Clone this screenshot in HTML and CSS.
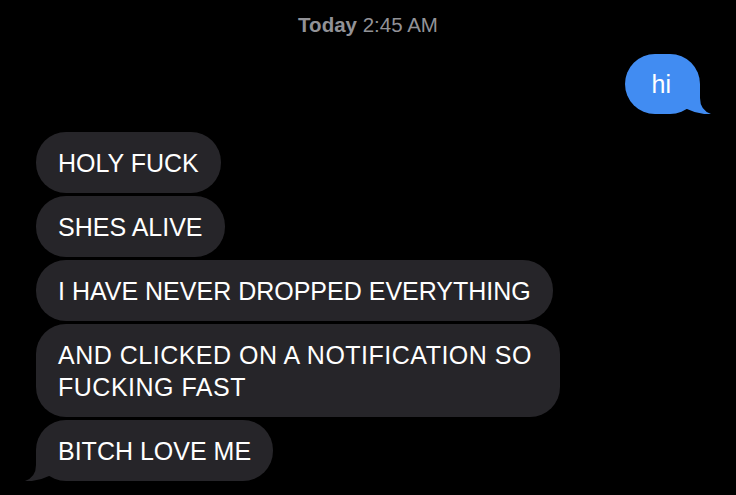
FILE: index.html
```html
<!DOCTYPE html>
<html lang="en">
<head>
<meta charset="utf-8">
<title>Messages</title>
<link rel="stylesheet" href="styles.css">
</head>
<body>
<main class="thread">
  <div class="stamp"><span class="stamp-day">Today</span> 2:45 AM</div>

  <div class="sent-row">
    <div class="bubble bubble-sent"><svg class="tail tail-right" viewBox="0 0 40 30" width="40" height="30"><path d="M29 0 L29 14 Q29 26 40 30 Q28 31 16 25 L0 25 L0 0 Z"/></svg><span class="text">hi</span></div>
  </div>

  <div class="received-group">
    <div class="bubble bubble-received"><span class="text">HOLY FUCK</span></div>
    <div class="bubble bubble-received"><span class="text">SHES ALIVE</span></div>
    <div class="bubble bubble-received"><span class="text">I HAVE NEVER DROPPED EVERYTHING</span></div>
    <div class="bubble bubble-received wide"><span class="text">AND CLICKED ON A NOTIFICATION SO<br>FUCKING FAST</span></div>
    <div class="bubble bubble-received"><svg class="tail tail-left" viewBox="0 0 40 30" width="40" height="30"><path d="M11 0 L11 14 Q11 26 0 30 Q12 31 24 25 L40 25 L40 0 Z"/></svg><span class="text">BITCH LOVE ME</span></div>
  </div>
</main>
</body>
</html>
```
FILE: styles.css
```css
html, body {
  margin: 0;
  padding: 0;
  background: #000;
}

body {
  font-family: "Liberation Sans", Arial, sans-serif;
  color: #fff;
  overflow: hidden;
}

.thread {
  display: flex;
  flex-direction: column;
  padding: 13px 36px 0;
}

.stamp {
  text-align: center;
  font-size: 20.5px;
  line-height: 24px;
  color: #929297;
}

.stamp-day {
  font-weight: 700;
}

.sent-row {
  display: flex;
  justify-content: flex-end;
  margin-top: 17px;
}

.received-group {
  display: flex;
  flex-direction: column;
  align-items: flex-start;
  gap: 3px;
  margin-top: 18px;
}

.bubble {
  position: relative;
  font-size: 25px;
  line-height: 32px;
  border-radius: 30px;
  box-sizing: border-box;
}

.text {
  position: relative;
  z-index: 1;
}

.bubble-sent {
  background: #418cf2;
  padding: 14px 29px 14px 27px;
}

.bubble-received {
  background: #262529;
  padding: 14.5px 22px;
}

.wide {
  letter-spacing: 0.5px;
  padding-right: 28px;
}

.tail {
  position: absolute;
  bottom: 0;
  display: block;
  z-index: 0;
}

.tail-right {
  right: -11px;
  fill: #418cf2;
}

.tail-left {
  left: -11px;
  fill: #262529;
}
```
